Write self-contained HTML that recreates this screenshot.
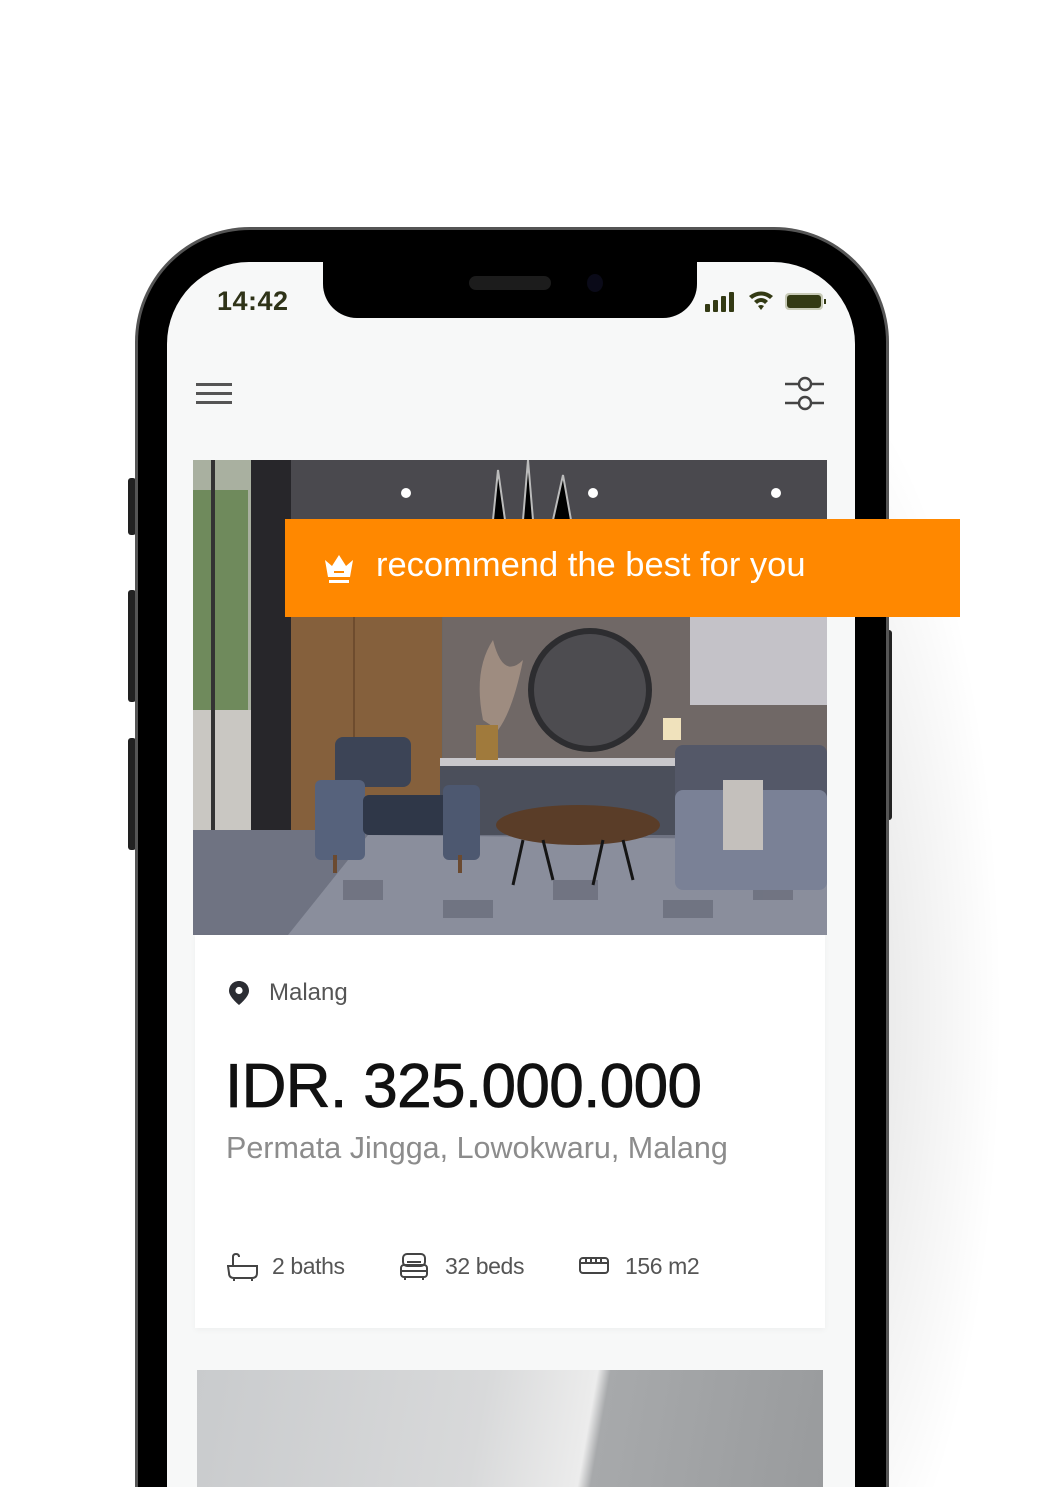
<!DOCTYPE html>
<html><head><meta charset="utf-8"><style>
*{margin:0;padding:0;box-sizing:border-box}
html,body{width:1058px;height:1487px;overflow:hidden;background:#fff;font-family:"Liberation Sans",sans-serif}
.abs{position:absolute}
#wrap{position:relative;width:1058px;height:1487px;overflow:hidden}
</style></head><body><div id="wrap">
<div class="abs" style="left:700px;top:300px;width:320px;height:1187px;background:radial-gradient(ellipse at 30% 60%,rgba(0,0,0,0.14),rgba(0,0,0,0) 65%)"></div>
<div class="abs" style="left:128px;top:478px;width:8px;height:57px;background:#222;border-radius:3px"></div>
<div class="abs" style="left:128px;top:590px;width:8px;height:112px;background:#222;border-radius:3px"></div>
<div class="abs" style="left:128px;top:738px;width:8px;height:112px;background:#222;border-radius:3px"></div>
<div class="abs" style="left:884px;top:630px;width:8px;height:190px;background:#222;border-radius:3px"></div>
<div class="abs" style="left:135px;top:227px;width:754px;height:1260px;background:#000;border-radius:115px 115px 0 0;border:3px solid #555;border-bottom:0"></div>
<div class="abs" style="left:167px;top:262px;width:688px;height:1225px;background:#f7f8f8;border-radius:82px 82px 0 0;overflow:hidden">
  <div class="abs" style="left:156px;top:-10px;width:374px;height:66px;background:#000;border-radius:0 0 34px 34px"></div>
  <div class="abs" style="left:302px;top:14px;width:82px;height:14px;background:#1c1c1c;border-radius:7px"></div>
  <div class="abs" style="left:420px;top:12px;width:16px;height:18px;background:#0a0a18;border-radius:50%"></div>
  <div class="abs" style="left:50px;top:24px;font-size:27px;font-weight:bold;color:#2f3318;letter-spacing:0.5px">14:42</div>
  <svg class="abs" style="left:538px;top:28px" width="125" height="26" viewBox="0 0 125 26">
    <g fill="#333a14"><rect x="0" y="14" width="5" height="8" rx="1"/><rect x="8" y="10" width="5" height="12" rx="1"/><rect x="16" y="6" width="5" height="16" rx="1"/><rect x="24" y="2" width="5" height="20" rx="1"/>
    <path d="M44 6 Q56 -3 68 6 L65 9 Q56 2 47 9Z"/><path d="M49 11 Q56 5 63 11 L60 14 Q56 10 52 14Z"/><path d="M53 16 L56 20 L59 16 Q56 14 53 16Z"/>
    <rect x="80" y="3" width="38" height="17" rx="4" fill="#c8cbb8"/><rect x="82" y="5" width="34" height="13" rx="3"/><rect x="119" y="9" width="2" height="5"/></g>
  </svg>
  <div class="abs" style="left:29px;top:121px;width:36px;height:3px;background:#555"></div>
  <div class="abs" style="left:29px;top:130px;width:36px;height:3px;background:#555"></div>
  <div class="abs" style="left:29px;top:139px;width:36px;height:3px;background:#555"></div>
  <svg class="abs" style="left:617px;top:112px" width="42" height="40" viewBox="0 0 42 40" fill="none" stroke="#444" stroke-width="2.4">
    <path d="M1 10H14M28 10H40M1 29H14M28 29H40"/><circle cx="21" cy="10" r="6"/><circle cx="21" cy="29" r="6"/>
  </svg>
  <svg class="abs" style="left:26px;top:198px" width="634" height="475" viewBox="0 0 634 475">
    <rect width="634" height="475" fill="#6b6765"/>
    <rect width="634" height="62" fill="#4a494e"/>
    <rect x="250" y="62" width="384" height="250" fill="#706866"/>
    <rect x="497" y="157" width="137" height="88" fill="#c4c2c8"/>
    <rect x="97" y="60" width="152" height="320" fill="#85603c"/>
    <rect x="160" y="60" width="2" height="320" fill="#6e4c2e"/>
    <rect x="0" y="0" width="62" height="475" fill="#a9b0a0"/>
    <rect x="0" y="30" width="55" height="230" fill="#6f8a5c"/>
    <rect x="0" y="250" width="62" height="130" fill="#c9c7c2"/>
    <rect x="18" y="0" width="4" height="400" fill="#333"/>
    <rect x="58" y="0" width="40" height="400" fill="#27262a"/>
    <rect x="0" y="370" width="634" height="105" fill="#6f7382"/>
    <polygon points="95,475 175,375 634,380 634,475" fill="#8a8e9c"/>
    <g fill="#6a6e7c" opacity=".8"><rect x="150" y="420" width="40" height="20"/><rect x="250" y="440" width="50" height="18"/><rect x="360" y="420" width="45" height="20"/><rect x="470" y="440" width="50" height="18"/><rect x="560" y="420" width="40" height="20"/></g>
    <circle cx="397" cy="230" r="62" fill="#2d2d30"/><circle cx="397" cy="230" r="56" fill="#4d4c50"/>
    <rect x="247" y="300" width="250" height="75" fill="#4b4f5b"/>
    <rect x="247" y="298" width="250" height="8" fill="#c9c8cc"/>
    <rect x="470" y="258" width="18" height="22" fill="#f0e2bc"/>
    <circle cx="213" cy="33" r="5" fill="#fff"/><circle cx="400" cy="33" r="5" fill="#fff"/><circle cx="583" cy="33" r="5" fill="#fff"/>
    <path d="M300 60 L305 10 L312 60 M330 60 L335 0 L340 60 M360 60 L370 15 L378 60" stroke="#bbb" stroke-width="2"/>
    <path d="M290 260 Q280 210 300 180 Q310 220 330 200 Q320 250 305 270Z" fill="#9e8c80"/>
    <rect x="283" y="265" width="22" height="35" fill="#a07a3c"/>
    <rect x="142" y="277" width="76" height="50" rx="8" fill="#3c4456"/>
    <rect x="122" y="320" width="50" height="80" rx="6" fill="#56627c"/>
    <rect x="170" y="335" width="90" height="40" rx="6" fill="#2f3748"/>
    <rect x="250" y="325" width="37" height="75" rx="6" fill="#4d5870"/>
    <rect x="140" y="395" width="4" height="18" fill="#6b4a30"/><rect x="265" y="395" width="4" height="18" fill="#6b4a30"/>
    <rect x="482" y="285" width="152" height="60" rx="8" fill="#545868"/>
    <rect x="482" y="330" width="152" height="100" rx="8" fill="#7a8196"/>
    <rect x="530" y="320" width="40" height="70" fill="#c4c0bc"/>
    <ellipse cx="385" cy="365" rx="82" ry="20" fill="#5a3d28"/>
    <path d="M330 380 L320 425 M350 380 L360 420 M410 380 L400 425 M430 380 L440 420" stroke="#151515" stroke-width="3"/>
  </svg>
  <div class="abs" style="left:28px;top:673px;width:630px;height:393px;background:#fff;box-shadow:0 2px 6px rgba(0,0,0,0.04)">
    <svg class="abs" style="left:33px;top:45px" width="22" height="26" viewBox="0 0 22 26"><path d="M11 1C5 1 1 5.5 1 11C1 17 11 25 11 25S21 17 21 11C21 5.5 17 1 11 1Z" fill="#2b2d33"/><circle cx="11" cy="10.5" r="3.6" fill="#fff"/></svg>
    <div class="abs" style="left:74px;top:44px;font-size:24px;color:#555">Malang</div>
    <div class="abs" style="left:30px;top:116px;font-size:62px;color:#111;-webkit-text-stroke:0.8px #111;letter-spacing:-0.6px;white-space:nowrap">IDR. 325.000.000</div>
    <div class="abs" style="left:31px;top:196px;font-size:30.5px;color:#8c8c8c;white-space:nowrap">Permata Jingga, Lowokwaru, Malang</div>
    <svg class="abs" style="left:32px;top:318px" width="32" height="30" viewBox="0 0 32 30" fill="none" stroke="#444" stroke-width="2"><path d="M6 12V4Q6 1 9 1Q12 1 12 4M1 13H30V20Q30 25 25 25H7Q2 25 2 20Z M7 25V28M25 25V28"/></svg>
    <div class="abs" style="left:77px;top:318px;font-size:23px;color:#555;letter-spacing:-0.4px">2 baths</div>
    <svg class="abs" style="left:204px;top:317px" width="30" height="30" viewBox="0 0 30 30" fill="none" stroke="#444" stroke-width="2"><rect x="4" y="2" width="22" height="12" rx="4"/><rect x="2" y="13" width="26" height="12" rx="3"/><path d="M2 19H28M6 25V28M24 25V28M8 10H22"/></svg>
    <div class="abs" style="left:250px;top:318px;font-size:23px;color:#555;letter-spacing:-0.4px">32 beds</div>
    <svg class="abs" style="left:384px;top:320px" width="30" height="22" viewBox="0 0 30 22" fill="none" stroke="#444" stroke-width="2"><rect x="1" y="3" width="28" height="15" rx="3"/><path d="M1 8H29M7 4V7M12 4V7M17 4V7M22 4V7"/></svg>
    <div class="abs" style="left:430px;top:318px;font-size:23px;color:#555;letter-spacing:-0.4px">156 m2</div>
  </div>
  <div class="abs" style="left:30px;top:1108px;width:626px;height:117px;background:linear-gradient(100deg,#c9cbcd 0%,#d8d9da 45%,#ececec 62%,#a7a9ab 64%,#999b9d 100%)"></div>
</div>
<div class="abs" style="left:285px;top:519px;width:675px;height:98px;background:#ff8800"></div>
<svg class="abs" style="left:323px;top:552px" width="32" height="32" viewBox="0 0 32 32"><path d="M2 8L9 14L16 3L23 14L30 8L27 25H5Z" fill="#fff"/><rect x="11" y="19" width="10" height="2" fill="#ff8800"/><rect x="6" y="28" width="20" height="3" fill="#fff"/></svg>
<div class="abs" style="left:376px;top:546px;font-size:34.5px;color:#fff;white-space:nowrap">recommend the best for you</div>
</div></body></html>
